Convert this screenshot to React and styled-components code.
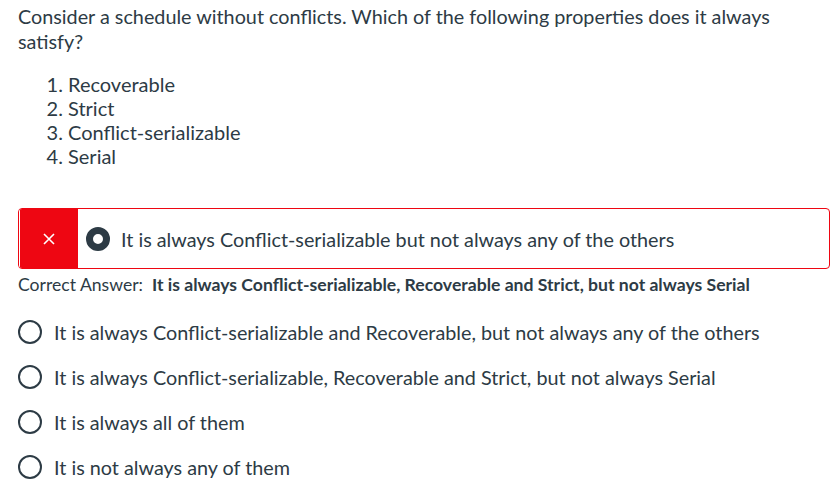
import React from 'react';
import styled, { createGlobalStyle } from 'styled-components';

const GlobalStyle = createGlobalStyle`
  body {
    margin: 0;
    background: #ffffff;
    font-family: Lato, "Open Sans", sans-serif;
    color: #2d3b45;
  }
`;

const Page = styled.div`
  padding: 4px 6px 0 18px;
`;

const Question = styled.p`
  margin: 0;
  font-size: 19.8px;
  line-height: 25px;
`;

const Properties = styled.ol`
  margin: 18px 0 0;
  padding-left: 50px;
  font-size: 20px;
  line-height: 24px;
`;

const AnswerBox = styled.div`
  margin-top: 40px;
  display: flex;
  align-items: center;
  height: 61px;
  box-sizing: border-box;
  border: 1px solid #ee0612;
  border-radius: 4px;
  overflow: hidden;
`;

const WrongFlag = styled.div`
  width: 59px;
  align-self: stretch;
  display: flex;
  align-items: center;
  justify-content: center;
  background: #ee0612;
  box-shadow: inset 1px 0 0 #ffffff;
`;

const Radio = styled.span`
  flex: none;
  box-sizing: border-box;
  width: 24px;
  height: 24px;
  border-radius: 50%;
  border: ${p => (p.$checked ? '7.5px solid #2d3b45' : '2px solid #2d3b45')};
  background: #ffffff;
`;

const ChoiceText = styled.span`
  font-size: 19.8px;
  line-height: 24px;
`;

const SelectedRow = styled.div`
  display: flex;
  align-items: center;
  gap: 11px;
  padding-left: 8px;
`;

const CorrectLine = styled.div`
  margin-top: 4px;
  font-size: 17.6px;
  line-height: 24px;
  display: flex;
  gap: 9px;
`;

const CorrectAnswer = styled.strong`
  font-weight: 700;
`;

const Options = styled.div`
  margin-top: 23px;
  display: flex;
  flex-direction: column;
  gap: 21px;
`;

const Option = styled.label`
  display: flex;
  align-items: center;
  gap: 12px;
  height: 24px;
`;

const options = [
  'It is always Conflict-serializable and Recoverable, but not always any of the others',
  'It is always Conflict-serializable, Recoverable and Strict, but not always Serial',
  'It is always all of them',
  'It is not always any of them',
];

export default function App() {
  return (
    <>
      <GlobalStyle />
      <Page>
        <Question>
          Consider a schedule without conflicts. Which of the following properties does it always
          satisfy?
        </Question>
        <Properties>
          <li>Recoverable</li>
          <li>Strict</li>
          <li>Conflict-serializable</li>
          <li>Serial</li>
        </Properties>

        <AnswerBox>
          <WrongFlag>
            <svg width="12" height="12" viewBox="0 0 12 12">
              <path d="M1 1 L11 11 M11 1 L1 11" stroke="#ffffff" strokeWidth="1.6" />
            </svg>
          </WrongFlag>
          <SelectedRow>
            <Radio $checked />
            <ChoiceText>It is always Conflict-serializable but not always any of the others</ChoiceText>
          </SelectedRow>
        </AnswerBox>

        <CorrectLine>
          <span>Correct Answer:</span>
          <CorrectAnswer>
            It is always Conflict-serializable, Recoverable and Strict, but not always Serial
          </CorrectAnswer>
        </CorrectLine>

        <Options>
          {options.map(text => (
            <Option key={text}>
              <Radio />
              <ChoiceText>{text}</ChoiceText>
            </Option>
          ))}
        </Options>
      </Page>
    </>
  );
}
